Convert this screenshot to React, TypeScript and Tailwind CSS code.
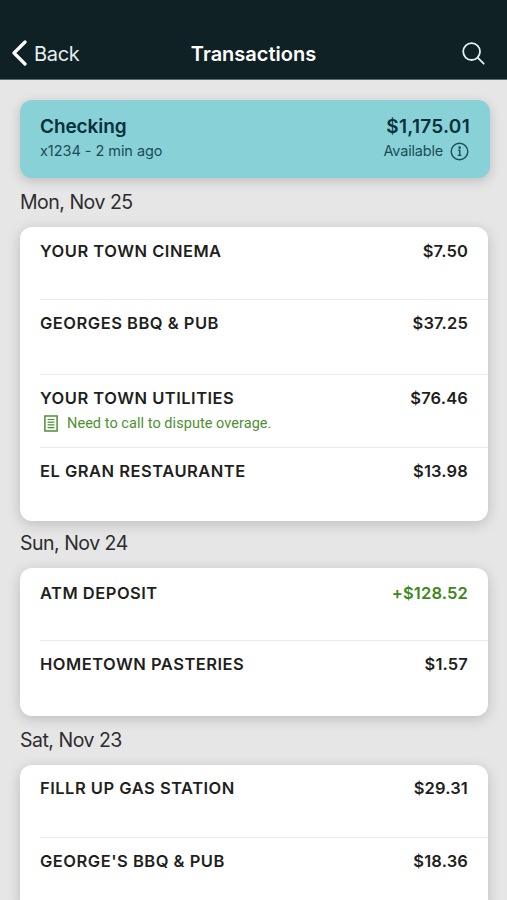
interface Transaction {
  name: string;
  amount: string;
  height: string;
  note?: string;
  credit?: boolean;
}

interface TransactionGroup {
  date: string;
  labelClass: string;
  items: Transaction[];
}

const groups: TransactionGroup[] = [
  {
    date: 'Mon, Nov 25',
    labelClass: 'h-[49px] pt-3',
    items: [
      { name: 'YOUR TOWN CINEMA', amount: '$7.50', height: 'h-[72px] pt-3' },
      { name: 'GEORGES BBQ & PUB', amount: '$37.25', height: 'h-[75px] pt-[11px]' },
      { name: 'YOUR TOWN UTILITIES', amount: '$76.46', height: 'h-[73px] pt-[11px]', note: 'Need to call to dispute overage.' },
      { name: 'EL GRAN RESTAURANTE', amount: '$13.98', height: 'h-[74px] pt-[11px]' },
    ],
  },
  {
    date: 'Sun, Nov 24',
    labelClass: 'h-[47px] pt-[10px]',
    items: [
      { name: 'ATM DEPOSIT', amount: '+$128.52', height: 'h-[72px] pt-[13px]', credit: true },
      { name: 'HOMETOWN PASTERIES', amount: '$1.57', height: 'h-[76px] pt-[11px]' },
    ],
  },
  {
    date: 'Sat, Nov 23',
    labelClass: 'h-[49px] pt-3',
    items: [
      { name: 'FILLR UP GAS STATION', amount: '$29.31', height: 'h-[72px] pt-[11px]' },
      { name: "GEORGE'S BBQ & PUB", amount: '$18.36', height: 'h-[75px] pt-[11px]' },
    ],
  },
];

function Header() {
  return (
    <header className="h-20 shrink-0 bg-[#102125] border-b border-[#5c686a] pt-[27px] pl-3 pr-[22px] grid grid-cols-[1fr_auto_1fr] items-center text-white">
      <button className="flex items-center text-[20px] leading-6 text-[#e4f0f0]">
        <svg width="15" height="26" viewBox="0 0 15 26" fill="none" stroke="#fff" strokeWidth="3.2" strokeLinecap="round" strokeLinejoin="round">
          <path d="M13 2 2 13l11 11" />
        </svg>
        <span className="ml-[7px] pt-px tracking-[-0.3px]">Back</span>
      </button>
      <h1 className="pt-px pl-[10px] text-[20px] leading-6 font-semibold">Transactions</h1>
      <button className="justify-self-end">
        <svg width="23" height="23" viewBox="0 0 23 23" fill="none" stroke="#e4f0f0" strokeWidth="1.8" strokeLinecap="round">
          <circle cx="9.6" cy="9.6" r="8.4" />
          <path d="m15.7 15.7 6 6" />
        </svg>
      </button>
    </header>
  );
}

function AccountCard() {
  return (
    <section className="h-[78px] ml-5 mr-[17px] rounded-xl bg-[#88d1d7] shadow-[0_3px_12px_rgba(0,0,0,0.18)] px-5 pt-[15px] flex justify-between text-[#06303a]">
      <div>
        <h2 className="text-[19px] leading-6 font-semibold tracking-[-0.1px]">Checking</h2>
        <p className="text-[14.5px] leading-6 tracking-[-0.05px] text-[#1c4d55]">x1234 - 2 min ago</p>
      </div>
      <div className="text-right">
        <p className="text-[19px] leading-6 font-semibold tracking-[0.28px]">$1,175.01</p>
        <p className="text-[14.5px] leading-6 text-[#1c4d55] flex items-center justify-end">
          <span className="tracking-[-0.2px]">Available</span>
          <svg className="ml-[7px] mr-px" width="19" height="19" viewBox="0 0 19 19" fill="none" stroke="currentColor" strokeWidth="1.4">
            <circle cx="9.5" cy="9.5" r="8.3" />
            <path d="M8.2 8.2h1.5v5M7.8 13.4h3.6" />
            <circle cx="9.6" cy="5.6" r="0.6" fill="currentColor" />
          </svg>
        </p>
      </div>
    </section>
  );
}

function NoteIcon() {
  return (
    <svg className="mb-[2px]" width="14" height="17" viewBox="0 0 14 17" fill="none" stroke="#4c9130" strokeWidth="1.5">
      <path d="M.9.9h12.2v15.2H.9z" />
      <path d="M3.6 4.5h6.8M3.6 7.2h6.8M3.6 9.9h6.8M3.6 12.6h6.8" strokeWidth="1.2" />
    </svg>
  );
}

function TransactionRow({ item, first }: { item: Transaction; first: boolean }) {
  return (
    <li className={`${item.height} ml-5 pr-5 ${first ? '' : 'border-t border-[#ebebeb]'}`}>
      <div className="flex justify-between text-[16.5px] leading-6 font-semibold text-[#1f1f21]">
        <span className="tracking-[0.5px]">{item.name}</span>
        <span className={`tracking-[0.15px] ${item.credit ? 'text-[#3f8720]' : ''}`}>{item.amount}</span>
      </div>
      {item.note && (
        <p className="mt-[2px] ml-1 flex items-center font-['Roboto',sans-serif] text-[14.5px] leading-6 tracking-[0.05px] text-[#4c9130]">
          <NoteIcon />
          <span className="ml-[9px]">{item.note}</span>
        </p>
      )}
    </li>
  );
}

export default function App() {
  return (
    <div className="w-full h-[900px] overflow-hidden flex flex-col bg-[#e6e6e6] font-['Inter',sans-serif]">
      <Header />
      <main className="pt-5">
        <AccountCard />
        {groups.map((group) => (
          <section key={group.date}>
            <h3 className={`${group.labelClass} pl-5 text-[19.5px] leading-6 tracking-[-0.5px] text-[#2d2d2f]`}>{group.date}</h3>
            <ul className="ml-5 mr-[19px] rounded-xl bg-white shadow-[0_3px_14px_rgba(0,0,0,0.18)]">
              {group.items.map((item, i) => (
                <TransactionRow key={item.name} item={item} first={i === 0} />
              ))}
            </ul>
          </section>
        ))}
      </main>
    </div>
  );
}
